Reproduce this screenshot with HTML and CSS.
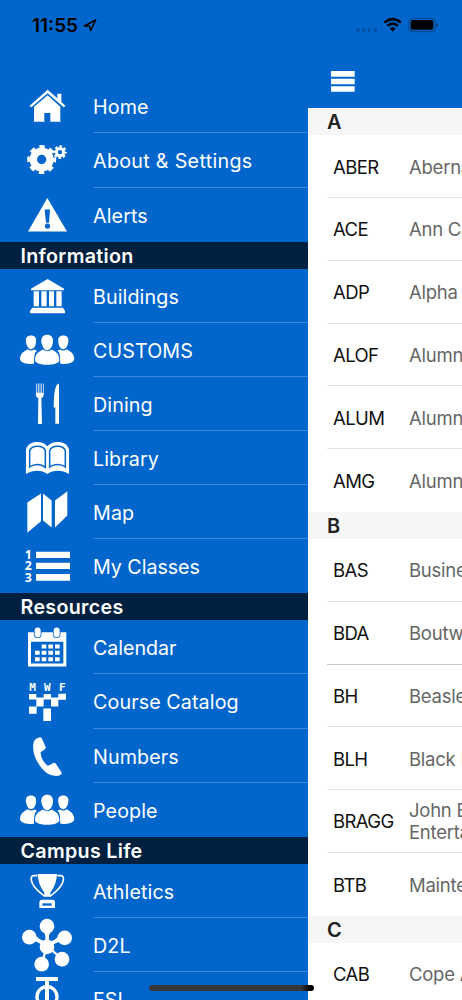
FILE: index.html
```
<!DOCTYPE html>
<html lang="en">
<head>
<meta charset="utf-8">
<title>Campus Directory</title>
<link rel="stylesheet" href="styles.css">
</head>
<body>
<div class="phone">
  <header class="status">
    <div class="status-left">
      <span class="time">11:55</span>
      <svg class="locate" viewBox="0 0 45 45"><path d="M4 24 L38 6 L23 38 L20 25 Z" fill="none" stroke="#000" stroke-width="4.500" stroke-linejoin="round"/></svg>
    </div>
    <svg class="status-right" viewBox="1062 45 258 60">
      <g fill="#0050a3"><rect x="1069" y="84" width="10" height="11" rx="3"/><rect x="1086" y="84" width="10" height="11" rx="3"/><rect x="1103" y="84" width="10" height="11" rx="3"/><rect x="1121" y="84" width="10" height="11" rx="3"/></g>
      <g fill="none" stroke="#000" stroke-width="7.500"><path d="M1153 68 Q1178 47 1203 68"/><path d="M1162 77.500 Q1178 64 1194 77.500"/></g>
      <path d="M1169 85 Q1178 78 1187 85 L1178 95 Z"/>
      <rect x="1226" y="55" width="80" height="40" rx="11" fill="none" stroke="#003f82" stroke-width="3"/>
      <rect x="1232" y="60" width="68" height="29" rx="6"/>
      <path d="M1309 68 Q1314 70 1314 75 Q1314 80 1309 82 Z" fill="#003f82"/>
    </svg>
  </header>
  <div class="body">
    <nav class="menu">
      <a class="item"><svg viewBox="0 -2 240 162.360"><path d="M88 79 L143 30 L172 56 V42 H184 V67 L197 79 L191 83 L143 41 L94 83 Z"/><path d="M102 81 L143 47 L181 81 V126 H151 V100 H133 V126 H102 Z"/></svg><span class="label">Home</span></a>
      <a class="item"><svg viewBox="0 160.400 240 162.360"><g fill="none" stroke="#fff"><circle cx="125" cy="240" r="25" stroke-width="22"/><circle cx="125" cy="240" r="38" stroke-width="11" stroke-dasharray="16 13.845" stroke-dashoffset="8"/><circle cx="180" cy="218" r="11" stroke-width="9"/><circle cx="180" cy="218" r="17.500" stroke-width="6" stroke-dasharray="8 5.745" stroke-dashoffset="4"/></g></svg><span class="label wide">About &amp; Settings</span></a>
      <a class="item"><svg viewBox="0 322.700 240 162.360"><path d="M142 353 L201 453 H84 Z"/><path class="cut" d="M134 387 H150 L147 427 H138 Z"/><circle class="cut" cx="142.500" cy="437" r="8"/></svg><span class="label">Alerts</span></a>
      <h2 class="band"><span>Information</span></h2>
      <a class="item"><svg viewBox="0 101 240 162.360"><path d="M143 131 L192 160 V165 H93 V160 Z M101 168 H117 V213 H101 Z M124 168 H140 V213 H124 Z M147 168 H162 V213 H147 Z M169 168 H185 V213 H169 Z M97 217 H189 L195 227 V234 H90 V227 Z"/></svg><span class="label">Buildings</span></a>
      <a class="item"><svg viewBox="0 263.500 240 162.360"><g id="group"><g id="side"><path d="M78 319 C76 307 83 301 93 301 C104 301 110 308 108 319 C108 332 101 342 93 342 C86 342 79 332 78 319 Z"/><path d="M60 372 C61 352 73 349 83 342 Q93 349 103 343 L111 347 C101 353 104 368 102 386 C83 387 62 384 60 372 Z"/></g><use href="#side" transform="matrix(-1 0 0 1 283 0)"/><path class="edge" d="M105 374 C106 354 117 350 129 343 Q142 352 154 343 C167 349 178 354 178 376 C178 384 158 389 141 389 C122 389 104 384 105 374 Z"/><path class="edge" d="M124 320 C123 306 131 299 141 299 C153 299 160 306 159 320 C158 335 149 346 141 346 C134 346 126 334 124 320 Z"/></g></svg><span class="label">CUSTOMS</span></a>
      <a class="item"><svg viewBox="0 20.700 240 162.360"><path d="M108 40 H110 V68 H113.500 V40 H116 V68 H119 V40 H121 V68 H124 V40 H126 V68 H129 V40 H131 V76 Q130 83 124 84 L126 162 H114 L115 84 Q109 83 108 76 Z"/><path d="M177 40 V161 H166 V112 H161 Q161 58 171 43 Z"/></svg><span class="label">Dining</span></a>
      <a class="item"><svg viewBox="0 183 240 162.360"><path d="M78 312 V238 C84 212 127 209 142 229 C158 209 201 212 207 238 V312 C186 300 162 298 142 312 C122 298 99 300 78 312 Z"/><g fill="none" stroke="#06c" stroke-width="4.500"><path d="M89 291 V242 C95 224 130 224 136 242 V292 C123 281 103 281 89 291 Z"/><path d="M149 291 V242 C155 224 190 224 196 242 V291 C183 281 162 281 149 291 Z"/></g></svg><span class="label">Library</span></a>
      <a class="item"><svg viewBox="0 0.500 240 162.360"><path d="M82 53 L123 26 V109 L82 144 Z M129 26 L155 47 V128 L129 107 Z M165 47 L202 19 V92 L165 128 Z"/></svg><span class="label">Map</span></a>
      <a class="item"><svg viewBox="0 162.900 240 162.360"><path d="M108 201 H210 V220 H108 Z M108 234 H210 V253 H108 Z M108 268 H210 V288 H108 Z"/><g class="nums"><text x="74" y="224">1</text><text x="74" y="257">2</text><text x="74" y="291">3</text></g></svg><span class="label tight">My Classes</span></a>
      <h2 class="band"><span>Resources</span></h2>
      <a class="item"><svg viewBox="0 1.500 240 162.360"><path d="M84 38 H199 V141 H84 Z"/><path class="cut" d="M93 67 H190 V132 H93 Z"/><g class="ring"><rect x="104" y="24" width="18" height="29" rx="9"/><rect x="161" y="24" width="18" height="29" rx="9"/></g><path d="M125 75 H139 V87 H125 Z M145 75 H159 V87 H145 Z M165 75 H179 V87 H165 Z M105 94 H119 V106 H105 Z M125 94 H139 V106 H125 Z M145 94 H159 V106 H145 Z M165 94 H179 V106 H165 Z M105 113 H119 V125 H105 Z M125 113 H139 V125 H125 Z M145 113 H159 V125 H145 Z M165 113 H179 V125 H165 Z"/></svg><span class="label tight">Calendar</span></a>
      <a class="item"><svg viewBox="0 163.800 240 162.360"><path d="M87 224 H109 V234 H131 V224 H153 V234 H175 V223 H198 V241 H175 V261 H153 V240 H131 V261 H109 V240 H87 Z M87 261 H110 V283 H87 Z M130 267 H153 V305 H130 Z"/><g class="days"><text x="88" y="216" textLength="20">M</text><text x="132" y="216" textLength="20">W</text><text x="177" y="216" textLength="18">F</text></g></svg><span class="label">Course Catalog</span></a>
      <a class="item"><svg viewBox="0 11.200 240 162.360"><path d="M120 36 Q125 36 127 43 L137 65 Q139 70 131 75 L122 80 Q121 102 142 121 Q146 122 152 118 L160 113 Q164 111 168 116 L184 140 Q188 147 178 151 Q158 155 140 143 C121 130 92 87 101 52 Q104 39 120 36 Z"/></svg><span class="label">Numbers</span></a>
      <a class="item"><svg viewBox="0 263.500 240 162.360"><use href="#group"/></svg><span class="label">People</span></a>
      <h2 class="band"><span>Campus Life</span></h2>
      <a class="item"><svg viewBox="0 12 240 162.360"><path d="M113 42 H171 Q170 73 151 98 V110 H133 V98 Q114 73 113 42 Z M126 119 H158 Q166 120 165 128 H118 Q118 120 126 119 Z M118 126 H165 V144 H118 Z"/><path class="cut" d="M127 130 H155 V137 H127 Z"/><path d="M112 47 H101 Q92 47 94 61 C98 83 124 101 134 109 M172 47 H183 Q192 47 190 61 C186 83 160 101 150 109" fill="none" stroke="#fff" stroke-width="5"/></svg><span class="label">Athletics</span></a>
      <a class="item"><svg viewBox="0 174.400 240 162.360"><g stroke="#fff" stroke-width="7"><path d="M141 258 L141 200 M141 258 L90 232 M141 258 L194 234 M141 258 L186 298 M141 258 L125 313"/></g><circle cx="141" cy="261" r="22"/><circle cx="141" cy="199" r="22"/><circle cx="88" cy="232" r="22"/><circle cx="194" cy="234" r="22"/><circle cx="186" cy="298" r="22"/><circle cx="125" cy="313" r="22"/><path d="M132 218 Q137 224 136 240 H147 Q146 224 151 218 Z M108 239 Q116 243 123 251 L129 242 Q119 240 109 229 Z M175 243 Q168 250 160 252 L154 243 Q165 242 173 231 Z"/></svg><span class="label">D2L</span></a>
      <a class="item"><svg viewBox="0 336.700 240 162.360"><path d="M108 352 H174 V364 H147 V490 H135 V364 H108 Z"/><circle cx="141" cy="411" r="30" fill="none" stroke="#fff" stroke-width="10"/></svg><span class="label">FSL</span></a>
    </nav>
    <main class="page">
      <div class="toolbar"><svg viewBox="0 0 72 64"><path d="M0 0 H71 V17 H0 Z M0 23 H71 V40 H0 Z M0 46 H71 V62 H0 Z"/></svg></div>
      <div class="list">
        <h3 class="letter">A</h3>
        <div class="row"><span class="code">ABER</span><span class="name">Abernathy Hall</span></div>
        <div class="row"><span class="code">ACE</span><span class="name">Ann Carr</span></div>
        <div class="row"><span class="code">ADP</span><span class="name">Alpha Delta Pi</span></div>
        <div class="row"><span class="code">ALOF</span><span class="name">Alumni Office</span></div>
        <div class="row"><span class="code">ALUM</span><span class="name">Alumni House</span></div>
        <div class="row"><span class="code">AMG</span><span class="name">Alumni Gym</span></div>
        <h3 class="letter">B</h3>
        <div class="row"><span class="code">BAS</span><span class="name">Business</span></div>
        <div class="row dark"><span class="code">BDA</span><span class="name">Boutwell</span></div>
        <div class="row"><span class="code">BH</span><span class="name">Beasley</span></div>
        <div class="row"><span class="code">BLH</span><span class="name">Black House</span></div>
        <div class="row"><span class="code">BRAGG</span><span class="name">John Bragg<br>Entertainment</span></div>
        <div class="row"><span class="code">BTB</span><span class="name">Maintenance</span></div>
        <h3 class="letter">C</h3>
        <div class="row"><span class="code">CAB</span><span class="name">Cope Admin</span></div>
      </div>
    </main>
  </div>
  <div class="home-bar"></div>
</div>
</body>
</html>
```
FILE: styles.css
```
* { box-sizing: border-box; }
body { margin: 0; }
.phone { position: relative; width: 462px; height: 1000px; overflow: hidden; background: #06c; display: flex; flex-direction: column; font-family: Inter, "Liberation Sans", sans-serif; font-size: 19.7px; white-space: nowrap; }
.status { height: 50px; flex: none; display: flex; justify-content: space-between; padding: 15px 22px 0 32px; }
.status-left { display: flex; height: 20px; align-items: center; gap: 5px; }
.time { font-size: 19px; font-weight: 600; line-height: 20px; padding-top: 1px; }
.locate { width: 15px; height: 15px; }
.status-right { width: 86px; height: 20px; }
.body { flex: 1; min-height: 0; display: flex; }
.menu { width: 308px; flex: none; padding-top: 29.3px; color: #fff; }
.item { height: 54.12px; display: flex; }
.item svg { width: 80px; height: 54.12px; flex: none; fill: #fff; }
.cut { fill: #06c; }
.edge, .ring { stroke: #06c; stroke-width: 5; paint-order: stroke; }
.nums { font: 700 37px "Open Sans", sans-serif; }
.days { font: 700 33px "DejaVu Sans Mono", monospace; }
.label { flex: 1; margin-left: 13px; line-height: 56.6px; letter-spacing: .1px; border-bottom: 1px solid #3b87d8; }
.wide { letter-spacing: .3px; }
.tight { letter-spacing: -.05px; }
.item:has(+ .band) .label { border-bottom: 0; }
.band { margin: 0; height: 27.06px; padding-left: 20.5px; background: #00203f; font-size: 19.7px; line-height: 28.6px; font-weight: 600; letter-spacing: .3px; }
.page { flex: 1; min-width: 0; display: flex; flex-direction: column; }
.toolbar { height: 58.3px; flex: none; padding: 20.7px 0 0 22.7px; }
.toolbar svg { display: block; width: 24px; height: 21.3px; fill: #fff; }
.list { flex: 1; background: #fff; overflow: hidden; }
.letter { margin: 0; height: 27.06px; padding-left: 19px; background: #f6f6f6; color: #222; font-size: 20px; font-weight: 600; line-height: 29.5px; }
.row { height: 62.78px; margin-left: 18.5px; padding: 1px 0 0 6.5px; display: flex; align-items: center; border-bottom: 1px solid #e4e4e4; }
.row:has(+ .letter) { border-bottom: 0; }
.dark { border-bottom-color: #c8c8c8; }
.code { width: 76px; flex: none; font-size: 18.5px; letter-spacing: -.6px; color: #111; }
.name { font-size: 18.5px; letter-spacing: -.25px; line-height: 22px; color: #666; }
.home-bar { position: absolute; left: 148.5px; top: 985px; width: 165px; height: 6px; border-radius: 3px; background: linear-gradient(90deg, #383838 92%, #000 98%); }
```
